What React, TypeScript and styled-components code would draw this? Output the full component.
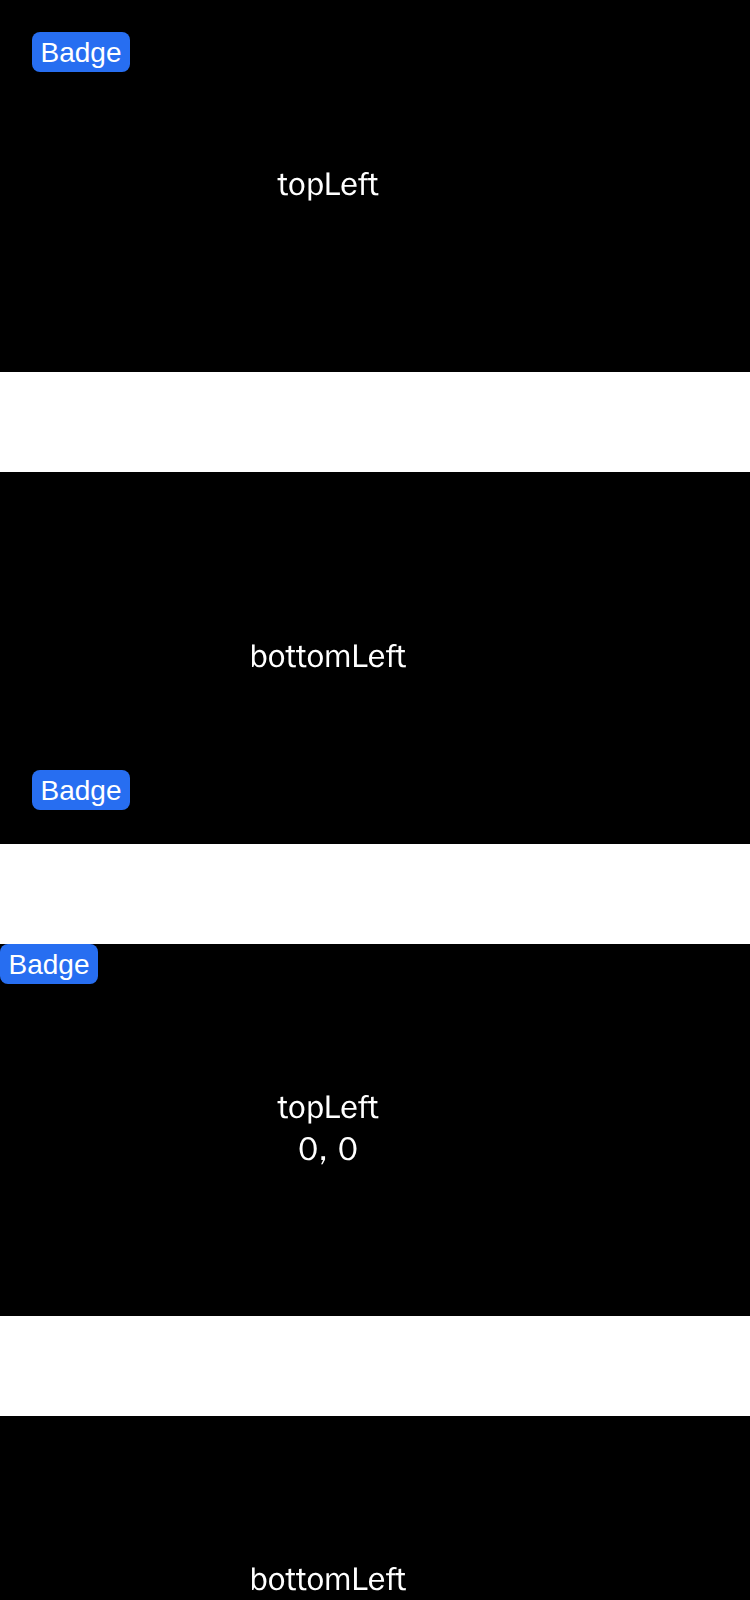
import React from 'react';
import styled, { createGlobalStyle } from 'styled-components';

const GlobalStyle = createGlobalStyle`
  * { box-sizing: border-box; }
  body {
    margin: 0;
    background: #fff;
    font-family: "Liberation Sans", Arial, sans-serif;
    overflow-x: hidden;
  }
`;

const List = styled.main`
  display: flex;
  flex-direction: column;
  gap: 100px;
`;

const Panel = styled.section`
  position: relative;
  display: flex;
  flex-direction: column;
  align-items: center;
  justify-content: center;
  min-height: 372px;
  padding: 0 94px 4px 0;
  background: #000;
`;

const Label = styled.p`
  margin: 0;
  color: #fff;
  font-family: "WenQuanYi Zen Hei", "Liberation Sans", sans-serif;
  font-size: 33px;
  line-height: 42px;
`;

const Badge = styled.span<{ $bottom: boolean; $flush: boolean }>`
  position: absolute;
  left: ${(p) => (p.$flush ? 0 : 32)}px;
  ${(p) =>
    p.$bottom
      ? `bottom: ${p.$flush ? 0 : 34}px;`
      : `top: ${p.$flush ? 0 : 32}px;`}
  min-width: 98px;
  padding: 1px 8px 0;
  border-radius: 8px;
  background: #276ef1;
  color: #fff;
  font-size: 28px;
  line-height: 39px;
  text-align: center;
`;

interface Example {
  placement: 'topLeft' | 'bottomLeft';
  offset?: string;
}

const examples: Example[] = [
  { placement: 'topLeft' },
  { placement: 'bottomLeft' },
  { placement: 'topLeft', offset: '0, 0' },
  { placement: 'bottomLeft', offset: '0, 0' },
];

export default function App() {
  return (
    <>
      <GlobalStyle />
      <List>
        {examples.map(({ placement, offset }, i) => (
          <Panel key={i}>
            <Label>{placement}</Label>
            {offset && <Label>{offset}</Label>}
            <Badge $bottom={placement === 'bottomLeft'} $flush={Boolean(offset)}>
              Badge
            </Badge>
          </Panel>
        ))}
      </List>
    </>
  );
}
